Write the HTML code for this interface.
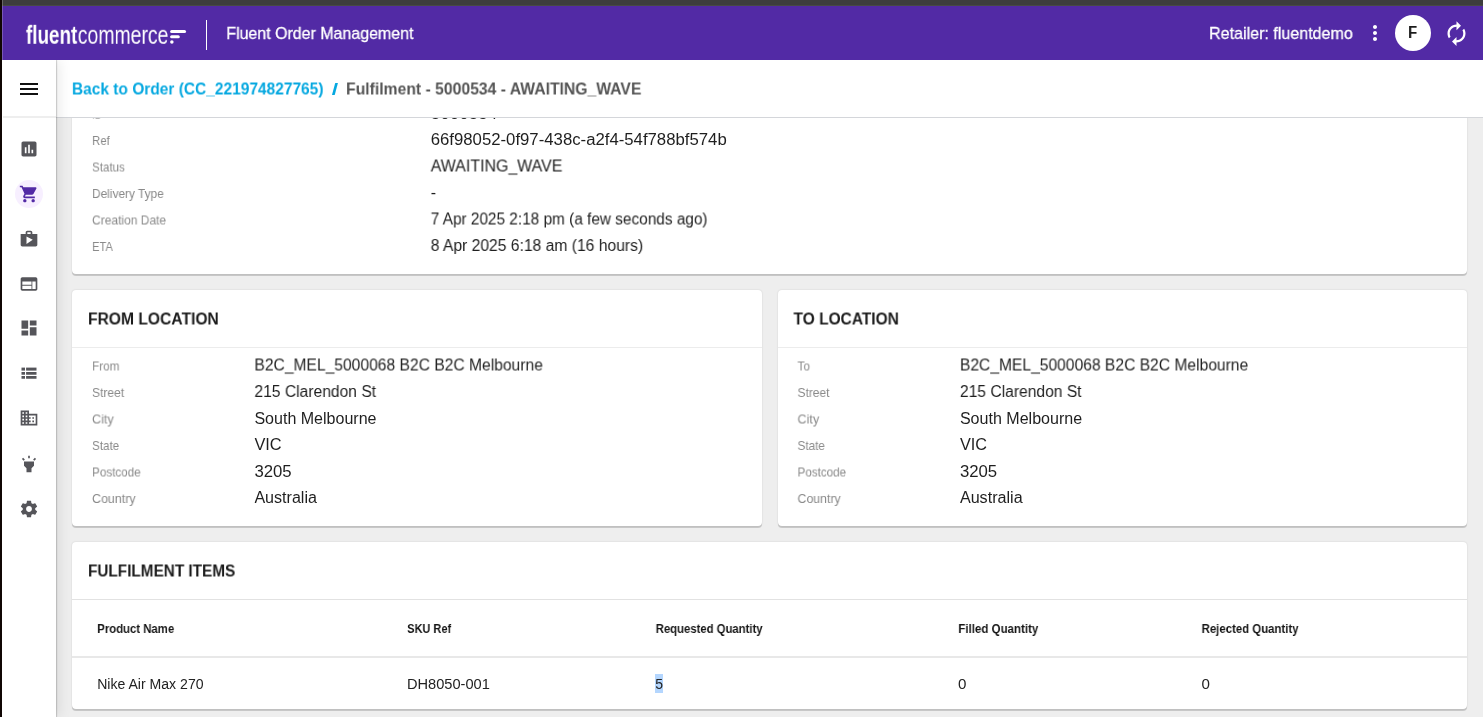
<!DOCTYPE html>
<html lang="en">
<head>
<meta charset="utf-8">
<title>Fluent Order Management</title>
<style>
*{box-sizing:border-box}
html,body{margin:0;padding:0}
body{width:1483px;height:717px;overflow:hidden;background:#eee;font-family:"Liberation Sans", sans-serif;position:relative}
#root{position:absolute;left:0;top:0;width:1483px;height:717px;overflow:hidden;background:#eee}
.t{position:absolute;left:0;top:0;white-space:nowrap;line-height:1;transform-origin:0 0;margin:0;font-weight:400;will-change:transform}
.ic{position:absolute;display:block}
#chrome-top{position:absolute;left:0;top:0;width:1483px;height:6px;background:#3d3d3d;border-bottom:1px solid #474a45;z-index:9}
#chrome-left{position:absolute;left:0;top:0;width:2px;height:717px;background:#100604;z-index:10}
#chrome-hl{position:absolute;left:2px;top:0;width:1px;height:60px;background:rgba(255,255,255,.22);z-index:10}
header{position:absolute;left:0;top:0;width:1483px;height:60px;background:#522aa5;z-index:6}
header .sep{position:absolute;left:206px;top:20px;width:1px;height:30px;background:#fff}
header .av{position:absolute;left:1395px;top:15px;width:36px;height:36px;border-radius:50%;background:#fff}
#side{position:absolute;left:0;top:60px;width:56px;height:657px;background:#fff;z-index:5;
  box-shadow:1px 0 0 rgba(0,0,0,.1),1px 0 2px rgba(0,0,0,.1),4px 0 12px rgba(0,0,0,.08)}
#side .ln{position:absolute;left:3px;top:56.4px;width:53px;height:1.6px;background:#eee}
#side .sel{position:absolute;width:28px;height:28px;border-radius:50%;background:#f7efff}
#crumb{position:absolute;left:56px;top:60px;width:1427px;height:58px;background:#fff;border-bottom:1px solid #d4d6da;z-index:4}
#main{position:absolute;left:0;top:0;width:1483px;height:717px;z-index:1}
.card{position:absolute;background:#fff;border-radius:4px;
  box-shadow:0 0 2px 0 rgba(0,0,0,.14),0 2px .6px 0 rgba(0,0,0,.155)}
.hr{position:absolute;left:0;right:0;height:1px;background:#ececec}
.selbg{position:absolute;background:#b4d6fe}
</style>
</head>
<body>
<div id="root">
<div id="chrome-top"></div><div id="chrome-left"></div><div id="chrome-hl"></div>
<header>
<svg class="ic" style="left:169px;top:29px" width="18" height="16" viewBox="0 0 18 16" aria-hidden="true"><g fill="#fff"><rect x="1.1" y="1" width="16" height="3.1" rx="1.55"/><rect x="1.1" y="6.2" width="9.7" height="3.1" rx="1.55"/><circle cx="2.85" cy="13.05" r="1.75"/></g></svg>
<div class="sep"></div>
<span class="t" id="lg1" style="font-size:25px;color:#fff;font-weight:700;transform:translate(25.95px,22.80px) scaleX(0.7541);">fluent</span>
<span class="t" id="lg2" style="font-size:25px;color:#fff;transform:translate(77.76px,22.80px) scaleX(0.7768);">commerce</span>
<span class="t" id="ttl" style="font-size:17px;color:#fff;-webkit-text-stroke:0.3px #fff;transform:translate(226.30px,25.00px) scaleX(0.9383);">Fluent Order Management</span>
<span class="t" id="ret" style="font-size:17px;color:#fff;-webkit-text-stroke:0.3px #fff;transform:translate(1209.05px,25.00px) scaleX(0.9449);">Retailer: fluentdemo</span>
<div class="av"></div><span class="t" id="ava" style="font-size:16px;color:#1a1a1a;font-weight:700;transform:translate(1408.00px,25.00px) scaleX(0.9390);">F</span>
<svg class="ic" style="left:1363px;top:21px" width="24" height="24" viewBox="0 0 24 24" fill="#fff" aria-hidden="true"><path d="M12 8c1.1 0 2-.9 2-2s-.9-2-2-2-2 .9-2 2 .9 2 2 2zm0 2c-1.1 0-2 .9-2 2s.9 2 2 2 2-.9 2-2-.9-2-2-2zm0 6c-1.1 0-2 .9-2 2s.9 2 2 2 2-.9 2-2-.9-2-2-2z"/></svg>
<svg class="ic" style="left:1443px;top:19.5px" width="27" height="27" viewBox="0 0 24 24" fill="#fff" aria-hidden="true"><path d="M12 6v3l4-4-4-4v3c-4.42 0-8 3.58-8 8 0 1.57.46 3.030 1.240 4.260L6.700 14.800c-.45-.83-.7-1.790-.7-2.800 0-3.310 2.690-6 6-6zm6.760 1.740L17.300 9.200c.44.84.7 1.790.7 2.800 0 3.310-2.690 6-6 6v-3l-4 4 4 4v-3c4.420 0 8-3.580 8-8 0-1.570-.46-3.030-1.240-4.260z"/></svg>
</header>
<nav id="side">
<svg class="ic" style="left:17px;top:17px" width="24" height="24" viewBox="0 0 24 24" fill="#111" aria-hidden="true"><path d="M3 18h18v-2H3v2zm0-5h18v-2H3v2zm0-7v2h18V6H3z"/></svg>
<div class="ln"></div>
<a class="nv" title="assessment"><svg class="ic" style="left:19px;top:78.7px" width="20" height="20" viewBox="0 0 24 24" fill="#55555a" aria-hidden="true"><path d="M19 3H5c-1.1 0-2 .9-2 2v14c0 1.1.9 2 2 2h14c1.1 0 2-.9 2-2V5c0-1.1-.9-2-2-2zM9 17H7v-7h2v7zm4 0h-2V7h2v10zm4 0h-2v-4h2v4z"/></svg></a>
<div class="sel" style="left:15px;top:119.7px"></div>
<a class="nv" title="cart"><svg class="ic" style="left:19px;top:123.7px" width="20" height="20" viewBox="0 0 24 24" fill="#522aa5" aria-hidden="true"><path d="M7 18c-1.1 0-1.99.9-1.99 2S5.9 22 7 22s2-.9 2-2-.9-2-2-2zM1 2v2h2l3.6 7.59-1.35 2.45c-.16.28-.25.61-.25.96 0 1.1.9 2 2 2h12v-2H7.42c-.14 0-.25-.11-.25-.25l.03-.12.9-1.63h7.45c.75 0 1.41-.41 1.75-1.03l3.58-6.49c.08-.14.12-.31.12-.48 0-.55-.45-1-1-1H5.21l-.94-2H1zm16 16c-1.1 0-1.99.9-1.99 2s.89 2 1.99 2 2-.9 2-2-.9-2-2-2z"/></svg></a>
<a class="nv" title="shop"><svg class="ic" style="left:19px;top:168.7px" width="20" height="20" viewBox="0 0 24 24" fill="#55555a" aria-hidden="true"><path d="M16 6V4c0-1.11-.89-2-2-2h-4c-1.11 0-2 .89-2 2v2H2v13c0 1.11.89 2 2 2h16c1.11 0 2-.89 2-2V6h-6zm-6-2h4v2h-4V4zM9 18V9l7.5 4L9 18z"/></svg></a>
<a class="nv" title="web"><svg class="ic" style="left:19px;top:213.7px" width="20" height="20" viewBox="0 0 24 24" fill="#55555a" aria-hidden="true"><path d="M20 4H4c-1.1 0-1.99.9-1.99 2L2 18c0 1.1.9 2 2 2h16c1.1 0 2-.9 2-2V6c0-1.1-.9-2-2-2zm-5 14H4v-4h11v4zm0-5H4V9h11v4zm5 5h-4V9h4v9z"/></svg></a>
<a class="nv" title="dashboard"><svg class="ic" style="left:19px;top:258.2px" width="20" height="20" viewBox="0 0 24 24" fill="#55555a" aria-hidden="true"><path d="M3 13h8V3H3v10zm0 8h8v-6H3v6zm10 0h8V11h-8v10zm0-18v6h8V3h-8z"/></svg></a>
<a class="nv" title="list"><svg class="ic" style="left:19px;top:303.2px" width="20" height="20" viewBox="0 0 24 24" fill="#55555a" aria-hidden="true"><rect x="3" y="5.52" width="4.2" height="3.6"/><rect x="8.5" y="5.52" width="12.5" height="3.6"/><rect x="3" y="10.8" width="4.2" height="3.3"/><rect x="8.5" y="10.8" width="12.5" height="3.3"/><rect x="3" y="15.6" width="4.2" height="3.3"/><rect x="8.5" y="15.6" width="12.5" height="3.3"/></svg></a>
<a class="nv" title="business"><svg class="ic" style="left:19px;top:348.2px" width="20" height="20" viewBox="0 0 24 24" fill="#55555a" aria-hidden="true"><path d="M12 7V3H2v18h20V7H12zM6 19H4v-2h2v2zm0-4H4v-2h2v2zm0-4H4V9h2v2zm0-4H4V5h2v2zm4 12H8v-2h2v2zm0-4H8v-2h2v2zm0-4H8V9h2v2zm0-4H8V5h2v2zm10 12h-8v-2h2v-2h-2v-2h2v-2h-2V9h8v10zm-2-8h-2v2h2v-2zm0 4h-2v2h2v-2z"/></svg></a>
<a class="nv" title="highlight"><svg class="ic" style="left:19px;top:393.7px" width="20" height="20" viewBox="0 0 24 24" fill="#55555a" aria-hidden="true"><path d="M6 14l3 3v5h6v-5l3-3V9H6v5zm5-12h2v3h-2V2zM3.5 5.88l1.41-1.41 2.12 2.12L5.62 8 3.5 5.88zm13.46.71l2.12-2.12 1.41 1.41L18.38 8l-1.42-1.41z"/></svg></a>
<a class="nv" title="settings"><svg class="ic" style="left:19px;top:438.7px" width="20" height="20" viewBox="0 0 24 24" fill="#55555a" aria-hidden="true"><path d="M19.43 12.98c.04-.32.07-.64.07-.98s-.03-.66-.07-.98l2.11-1.65c.19-.15.24-.42.12-.64l-2-3.46c-.12-.22-.39-.3-.61-.22l-2.49 1c-.52-.4-1.08-.73-1.69-.98l-.38-2.65C14.46 2.18 14.25 2 14 2h-4c-.25 0-.46.18-.49.42l-.38 2.65c-.61.25-1.17.59-1.69.98l-2.49-1c-.23-.09-.49 0-.61.22l-2 3.46c-.13.22-.07.49.12.64l2.11 1.65c-.04.32-.07.65-.07.98s.03.66.07.98l-2.11 1.65c-.19.15-.24.42-.12.64l2 3.46c.12.22.39.3.61.22l2.49-1c.52.4 1.08.73 1.69.98l.38 2.65c.03.24.24.42.49.42h4c.25 0 .46-.18.49-.42l.38-2.65c.61-.25 1.17-.59 1.69-.98l2.49 1c.23.09.49 0 .61-.22l2-3.46c.12-.22.07-.49-.12-.64l-2.11-1.65zM12 15.5c-1.93 0-3.5-1.57-3.5-3.5s1.570-3.500 3.500-3.500 3.500 1.570 3.500 3.500-1.570 3.500-3.500 3.500z"/></svg></a>
</nav>
<div id="crumb">
<div style="position:absolute;left:-56px;top:-60px"><span class="t" id="bc1" style="font-size:17px;color:#05a8e0;font-weight:700;transform:translate(71.91px,80.50px) scaleX(0.9117);">Back to Order (CC_221974827765)</span>
<span class="t" id="bc2" style="font-size:17px;color:#05a8e0;font-weight:700;transform:translate(331.69px,80.50px) scaleX(1.3500);">/</span>
<span class="t" id="bc3" style="font-size:17px;color:#555;font-weight:700;transform:translate(345.99px,80.50px) scaleX(0.9252);">Fulfilment - 5000534 - AWAITING_WAVE</span></div>
</div>
<main id="main">
<section class="card" style="left:72px;top:60px;width:1395px;height:214px"></section>
<section class="card" style="left:72px;top:290.3px;width:689.6px;height:235.7px"><div class="hr" style="top:56.5px"></div></section>
<section class="card" style="left:777.5px;top:290.3px;width:689.5px;height:235.7px"><div class="hr" style="top:56.5px"></div></section>
<section class="card" style="left:72px;top:542.3px;width:1395px;height:166.7px"><div class="hr" style="top:56.5px;background:#e2e2e2"></div><div class="hr" style="top:114.2px;height:1.2px;background:#e8e8e8"></div></section>
<div class="selbg" style="left:655px;top:673.7px;width:8.45px;height:19.5px"></div>
<div aria-label="Fulfilment details">
<span class="t" id="c1l0" style="font-size:13px;color:#8a8a8a;transform:translate(92.00px,107.60px) scaleX(0.7685);">ID</span>
<span class="t" id="c1v0" style="font-size:16px;color:#1f1f1f;transform:translate(430.70px,105.90px) scaleX(1.0663);">5000534</span>
<span class="t" id="c1l1" style="font-size:13px;color:#8a8a8a;transform:translate(92.00px,134.00px) scaleX(0.8809);">Ref</span>
<span class="t" id="c1v1" style="font-size:16px;color:#1f1f1f;transform:translate(430.70px,132.00px) scaleX(1.0463);">66f98052-0f97-438c-a2f4-54f788bf574b</span>
<span class="t" id="c1l2" style="font-size:13px;color:#8a8a8a;transform:translate(92.00px,160.50px) scaleX(0.8933);">Status</span>
<span class="t" id="c1v2" style="font-size:16px;color:#1f1f1f;transform:translate(430.70px,158.50px) scaleX(0.9968);">AWAITING_WAVE</span>
<span class="t" id="c1l3" style="font-size:13px;color:#8a8a8a;transform:translate(92.00px,187.00px) scaleX(0.9145);">Delivery Type</span>
<span class="t" id="c1v3" style="font-size:16px;color:#1f1f1f;transform:translate(430.70px,185.00px) scaleX(1.0000);">-</span>
<span class="t" id="c1l4" style="font-size:13px;color:#8a8a8a;transform:translate(92.00px,213.50px) scaleX(0.9232);">Creation Date</span>
<span class="t" id="c1v4" style="font-size:16px;color:#1f1f1f;transform:translate(430.70px,211.50px) scaleX(0.9607);">7 Apr 2025 2:18 pm (a few seconds ago)</span>
<span class="t" id="c1l5" style="font-size:13px;color:#8a8a8a;transform:translate(92.00px,240.00px) scaleX(0.8536);">ETA</span>
<span class="t" id="c1v5" style="font-size:16px;color:#1f1f1f;transform:translate(430.70px,238.00px) scaleX(0.9789);">8 Apr 2025 6:18 am (16 hours)</span>
</div>
<div aria-label="From location">
<span class="t" id="h2" style="font-size:16px;color:#1b1b1b;font-weight:700;transform:translate(88.00px,311.45px) scaleX(0.9768);">FROM LOCATION</span>
<span class="t" id="c2l0" style="font-size:13px;color:#8a8a8a;transform:translate(92.00px,359.50px) scaleX(0.9060);">From</span>
<span class="t" id="c2v0" style="font-size:16px;color:#1f1f1f;transform:translate(254.40px,357.50px) scaleX(0.9766);">B2C_MEL_5000068 B2C B2C Melbourne</span>
<span class="t" id="c2l1" style="font-size:13px;color:#8a8a8a;transform:translate(92.00px,386.00px) scaleX(0.9283);">Street</span>
<span class="t" id="c2v1" style="font-size:16px;color:#1f1f1f;transform:translate(254.40px,384.00px) scaleX(0.9767);">215 Clarendon St</span>
<span class="t" id="c2l2" style="font-size:13px;color:#8a8a8a;transform:translate(92.00px,412.50px) scaleX(0.9663);">City</span>
<span class="t" id="c2v2" style="font-size:16px;color:#1f1f1f;transform:translate(254.40px,410.50px) scaleX(1.0021);">South Melbourne</span>
<span class="t" id="c2l3" style="font-size:13px;color:#8a8a8a;transform:translate(92.00px,439.00px) scaleX(0.8990);">State</span>
<span class="t" id="c2v3" style="font-size:16px;color:#1f1f1f;transform:translate(254.40px,437.00px) scaleX(1.0231);">VIC</span>
<span class="t" id="c2l4" style="font-size:13px;color:#8a8a8a;transform:translate(92.00px,465.50px) scaleX(0.8975);">Postcode</span>
<span class="t" id="c2v4" style="font-size:16px;color:#1f1f1f;transform:translate(254.40px,463.50px) scaleX(1.0460);">3205</span>
<span class="t" id="c2l5" style="font-size:13px;color:#8a8a8a;transform:translate(92.00px,492.00px) scaleX(0.9585);">Country</span>
<span class="t" id="c2v5" style="font-size:16px;color:#1f1f1f;transform:translate(254.40px,490.00px) scaleX(1.0048);">Australia</span>
</div>
<div aria-label="To location">
<span class="t" id="h3" style="font-size:16px;color:#1b1b1b;font-weight:700;transform:translate(793.50px,311.45px) scaleX(0.9685);">TO LOCATION</span>
<span class="t" id="c3l0" style="font-size:13px;color:#8a8a8a;transform:translate(797.50px,359.50px) scaleX(0.9072);">To</span>
<span class="t" id="c3v0" style="font-size:16px;color:#1f1f1f;transform:translate(959.90px,357.50px) scaleX(0.9761);">B2C_MEL_5000068 B2C B2C Melbourne</span>
<span class="t" id="c3l1" style="font-size:13px;color:#8a8a8a;transform:translate(797.50px,386.00px) scaleX(0.9239);">Street</span>
<span class="t" id="c3v1" style="font-size:16px;color:#1f1f1f;transform:translate(959.90px,384.00px) scaleX(0.9770);">215 Clarendon St</span>
<span class="t" id="c3l2" style="font-size:13px;color:#8a8a8a;transform:translate(797.50px,412.50px) scaleX(0.9646);">City</span>
<span class="t" id="c3v2" style="font-size:16px;color:#1f1f1f;transform:translate(959.90px,410.50px) scaleX(1.0033);">South Melbourne</span>
<span class="t" id="c3l3" style="font-size:13px;color:#8a8a8a;transform:translate(797.50px,439.00px) scaleX(0.9036);">State</span>
<span class="t" id="c3v3" style="font-size:16px;color:#1f1f1f;transform:translate(959.90px,437.00px) scaleX(1.0159);">VIC</span>
<span class="t" id="c3l4" style="font-size:13px;color:#8a8a8a;transform:translate(797.50px,465.50px) scaleX(0.8952);">Postcode</span>
<span class="t" id="c3v4" style="font-size:16px;color:#1f1f1f;transform:translate(959.90px,463.50px) scaleX(1.0464);">3205</span>
<span class="t" id="c3l5" style="font-size:13px;color:#8a8a8a;transform:translate(797.50px,492.00px) scaleX(0.9480);">Country</span>
<span class="t" id="c3v5" style="font-size:16px;color:#1f1f1f;transform:translate(959.90px,490.00px) scaleX(1.0075);">Australia</span>
</div>
<div aria-label="Fulfilment items">
<span class="t" id="h4" style="font-size:16px;color:#1b1b1b;font-weight:700;transform:translate(88.00px,563.45px) scaleX(0.9580);">FULFILMENT ITEMS</span>
<span class="t" id="th0" style="font-size:13px;color:#161616;font-weight:700;transform:translate(97.20px,622.00px) scaleX(0.8737);">Product Name</span>
<span class="t" id="th1" style="font-size:13px;color:#161616;font-weight:700;transform:translate(407.20px,622.00px) scaleX(0.8445);">SKU Ref</span>
<span class="t" id="th2" style="font-size:13px;color:#161616;font-weight:700;transform:translate(655.70px,622.00px) scaleX(0.8708);">Requested Quantity</span>
<span class="t" id="th3" style="font-size:13px;color:#161616;font-weight:700;transform:translate(958.30px,622.00px) scaleX(0.8865);">Filled Quantity</span>
<span class="t" id="th4" style="font-size:13px;color:#161616;font-weight:700;transform:translate(1201.60px,622.00px) scaleX(0.8774);">Rejected Quantity</span>
<span class="t" id="td0" style="font-size:14px;color:#222;transform:translate(97.20px,677.00px) scaleX(1.0048);">Nike Air Max 270</span>
<span class="t" id="td1" style="font-size:14px;color:#222;transform:translate(406.90px,677.00px) scaleX(1.0437);">DH8050-001</span>
<span class="t" id="td2" style="font-size:14px;color:#222;transform:translate(655.30px,677.00px) scaleX(1.0000);">5</span>
<span class="t" id="td3" style="font-size:14px;color:#222;transform:translate(958.10px,677.00px) scaleX(1.0800);">0</span>
<span class="t" id="td4" style="font-size:14px;color:#222;transform:translate(1201.40px,677.00px) scaleX(1.0800);">0</span>
</div>
</main>
</div>
</body>
</html>
